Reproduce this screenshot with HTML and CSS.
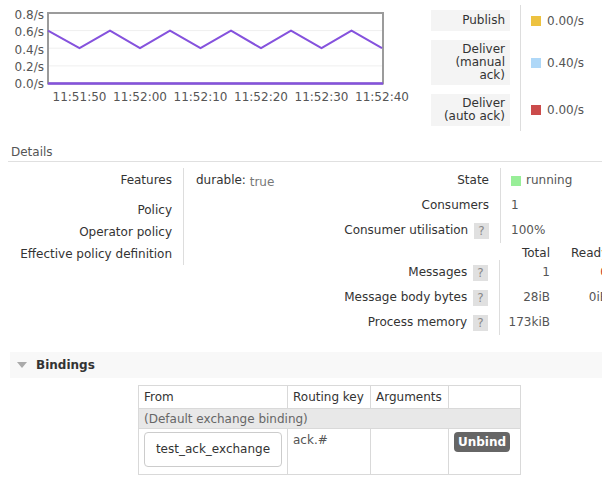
FILE: index.html
```html
<!DOCTYPE html>
<html>
<head>
<meta charset="utf-8">
<link rel="stylesheet" href="styles.css">
</head>
<body>
<div class="top">
  <svg class="chart" width="431" height="110" viewBox="0 0 431 110">
    <g class="ylab">
      <text x="44" y="19">0.8/s</text>
      <text x="44" y="36">0.6/s</text>
      <text x="44" y="53.5">0.4/s</text>
      <text x="44" y="70.5">0.2/s</text>
      <text x="44" y="88">0.0/s</text>
    </g>
    <g class="grid">
      <line x1="48" y1="30.6" x2="383" y2="30.6"/>
      <line x1="48" y1="48.2" x2="383" y2="48.2"/>
      <line x1="48" y1="65.9" x2="383" y2="65.9"/>
    </g>
    <rect class="frame" x="48" y="13" width="335" height="70.5"/>
    <polyline class="series" points="48,30.6 79.5,48.2 110,30.6 140,48.2 170,30.6 200.5,48.2 231,30.6 261,48.2 291,30.6 321.5,48.2 351.5,30.6 382,48.2"/>
    <line class="zero" x1="48" y1="83.5" x2="383" y2="83.5"/>
    <g class="xlab">
      <text x="79.5" y="100.5">11:51:50</text>
      <text x="140" y="100.5">11:52:00</text>
      <text x="200.5" y="100.5">11:52:10</text>
      <text x="261" y="100.5">11:52:20</text>
      <text x="321.5" y="100.5">11:52:30</text>
      <text x="382" y="100.5">11:52:40</text>
    </g>
  </svg>
  <div class="legend">
    <div class="llabel one r1">Publish</div>
    <div class="llabel r2">Deliver<br>(manual<br>ack)</div>
    <div class="llabel r3">Deliver<br>(auto ack)</div>
    <div class="lsep"></div>
    <div class="lval r1"><span class="sq yellow"></span>0.00/s</div>
    <div class="lval r2"><span class="sq blue"></span>0.40/s</div>
    <div class="lval r3"><span class="sq red"></span>0.00/s</div>
  </div>
</div>

<h2 class="section-title">Details</h2>
<div class="details">
  <div class="dleft">
    <div class="dk first">Features</div>
    <div class="dv first"><span class="feat">durable:</span> <span class="true">true</span></div>
    <div class="dk">Policy</div>
    <div class="dv"></div>
    <div class="dk">Operator policy</div>
    <div class="dv"></div>
    <div class="dk">Effective policy definition</div>
    <div class="dv"></div>
  </div>
  <div class="dright">
    <div class="state">
      <div class="sk">State</div>
      <div class="sv"><span class="green"></span>running</div>
      <div class="sk">Consumers</div>
      <div class="sv">1</div>
      <div class="sk">Consumer utilisation <span class="help">?</span></div>
      <div class="sv">100%</div>
    </div>
    <div class="msgs">
      <div class="mh"></div>
      <div class="mh num">Total</div>
      <div class="mh num ready">Ready</div>
      <div class="mk">Messages <span class="help">?</span></div>
      <div class="mv">1</div>
      <div class="mr red-text">0</div>
      <div class="mk">Message body bytes <span class="help">?</span></div>
      <div class="mv">28iB</div>
      <div class="mr">0iB</div>
      <div class="mk">Process memory <span class="help">?</span></div>
      <div class="mv">173kiB</div>
      <div class="mr"></div>
    </div>
  </div>
</div>

<div class="bindings-h"><span class="tri"></span>Bindings</div>
<table class="bindings">
  <colgroup>
    <col class="c1"><col class="c2"><col class="c3"><col class="c4">
  </colgroup>
  <tr class="head">
    <th>From</th>
    <th>Routing key</th>
    <th>Arguments</th>
    <th></th>
  </tr>
  <tr class="default">
    <td colspan="4">(Default exchange binding)</td>
  </tr>
  <tr class="row">
    <td><div class="xbox">test_ack_exchange</div></td>
    <td class="rk">ack.#</td>
    <td></td>
    <td class="act"><span class="unbind">Unbind</span></td>
  </tr>
</table>
</body>
</html>
```
FILE: styles.css
```css
html, body {
  margin: 0;
  width: 602px;
  height: 490px;
  overflow: hidden;
  background: #fff;
}
body {
  font-family: "DejaVu Sans", Verdana, sans-serif;
  font-size: 12px;
  line-height: 14px;
  color: #333;
}

/* top chart */
.top {
  display: flex;
  height: 145px;
}
.chart {
  flex: none;
  display: block;
  font-family: "DejaVu Sans", Verdana, sans-serif;
  font-size: 12px;
}
.ylab text { text-anchor: end; fill: #555; }
.xlab text { text-anchor: middle; fill: #555; }
.grid line { stroke: #efefef; stroke-width: 1; }
.frame { fill: none; stroke: #9b9b9b; stroke-width: 2; }
.series { fill: none; stroke: #8552dd; stroke-width: 2; stroke-linejoin: round; }
.zero { stroke: #8552dd; stroke-width: 2.5; }

.legend {
  display: grid;
  grid-template-columns: 79px 1px auto;
  column-gap: 10px;
  row-gap: 9px;
  align-self: start;
  align-items: center;
  margin-top: 10px;
}
.llabel {
  grid-column: 1;
  background: #f4f4f4;
  text-align: right;
  padding: 3px 5px;
  line-height: 13px;
  color: #333;
}
.llabel.one { padding: 4px 5px; }
.r1 { grid-row: 1; }
.r2 { grid-row: 2; }
.r3 { grid-row: 3; }
.lsep {
  grid-column: 2;
  grid-row: 1 / 4;
  align-self: stretch;
  background: #ddd;
  margin: -5px 0;
}
.lval {
  grid-column: 3;
  display: flex;
  align-items: center;
  gap: 6px;
  color: #555;
}
.sq { width: 10px; height: 10px; display: inline-block; }
.yellow { background: #edc240; }
.blue { background: #afd8f8; }
.red { background: #cb4b4b; }

/* details */
.section-title {
  margin: 0 0 0 8px;
  padding: 0 0 2px 3px;
  font-size: 12px;
  font-weight: normal;
  line-height: 14px;
  color: #555;
  border-bottom: 1px solid #e0e0e0;
}
.details {
  display: flex;
  align-items: flex-start;
  margin-top: 6px;
}
.dleft {
  display: grid;
  grid-template-columns: 175px 117px;
  margin-left: 8px;
}
.dk, .dv {
  box-sizing: border-box;
  height: 22px;
  line-height: 22px;
}
.dk {
  text-align: right;
  padding-right: 11px;
  white-space: nowrap;
}
.dv {
  border-left: 1px solid #ddd;
  padding-left: 12px;
  color: #555;
}
.dk.first, .dv.first {
  height: 31px;
  line-height: 14px;
  padding-top: 5px;
}
.feat { color: #333; }
.true { color: #777; position: relative; top: 2px; }

.dright { flex: 1; }
.state {
  display: grid;
  grid-template-columns: 200px auto;
}
.sk, .sv {
  box-sizing: border-box;
  height: 25px;
  line-height: 25px;
  white-space: nowrap;
}
.sk {
  text-align: right;
  padding-right: 11px;
}
.sv {
  border-left: 1px solid #ddd;
  padding-left: 10px;
  color: #555;
  display: flex;
  align-items: center;
}
.green {
  display: inline-block;
  width: 10px;
  height: 10px;
  background: #98ee98;
  margin-right: 5px;
}
.help {
  display: inline-block;
  width: 15px;
  height: 16px;
  line-height: 16px;
  background: #e0e0e0;
  color: #888;
  text-align: center;
  margin-left: 2px;
  vertical-align: middle;
}
.msgs {
  display: grid;
  grid-template-columns: 199px 51px 58px;
  margin-top: 3px;
}
.mh {
  height: 14px;
  line-height: 14px;
  white-space: nowrap;
}
.mh.num { text-align: right; color: #333; }
.mh.ready { text-align: left; padding-left: 21px; }
.mk, .mv, .mr {
  box-sizing: border-box;
  height: 25px;
  line-height: 25px;
  white-space: nowrap;
}
.mk {
  text-align: right;
  padding-right: 11px;
}
.mv {
  border-left: 1px solid #ddd;
  text-align: right;
  color: #555;
}
.mr {
  text-align: right;
  color: #555;
}
.red-text { color: #c0392b; }

/* bindings */
.bindings-h {
  margin: 17px 0 0 10px;
  height: 26px;
  background: #f8f8f8;
  display: flex;
  align-items: center;
  padding-left: 7px;
  font-weight: bold;
  color: #333;
}
.tri {
  width: 0;
  height: 0;
  border-left: 5px solid transparent;
  border-right: 5px solid transparent;
  border-top: 6px solid #aaa;
  margin-right: 9px;
}
.bindings {
  margin: 7px 0 0 138px;
  border-collapse: collapse;
  border: 1px solid #d4d4d4;
  table-layout: fixed;
  width: 382px;
}
.c1 { width: 149px; }
.c2 { width: 83px; }
.c3 { width: 78px; }
.c4 { width: 72px; }
.bindings th, .bindings td {
  border: 1px solid #d9d9d9;
  padding: 0 5px;
  text-align: left;
  font-weight: normal;
  color: #333;
  white-space: nowrap;
  overflow: hidden;
}
.head th {
  height: 23px;
  box-sizing: border-box;
}
.default td {
  background: #e8e8e8;
  color: #666;
  height: 20px;
  box-sizing: border-box;
}
.row td {
  height: 46px;
  box-sizing: border-box;
  vertical-align: top;
}
.xbox {
  margin-top: 3px;
  height: 35px;
  box-sizing: border-box;
  border: 1px solid #ccc;
  border-radius: 4px;
  line-height: 33px;
  text-align: center;
  color: #333;
}
.rk { padding-top: 4px !important; color: #555 !important; }
.act { padding-top: 3px !important; }
.unbind {
  display: inline-block;
  width: 56px;
  height: 20px;
  line-height: 20px;
  text-align: center;
  background: #666;
  color: #fff;
  font-weight: bold;
  border-radius: 4px;
}
```
